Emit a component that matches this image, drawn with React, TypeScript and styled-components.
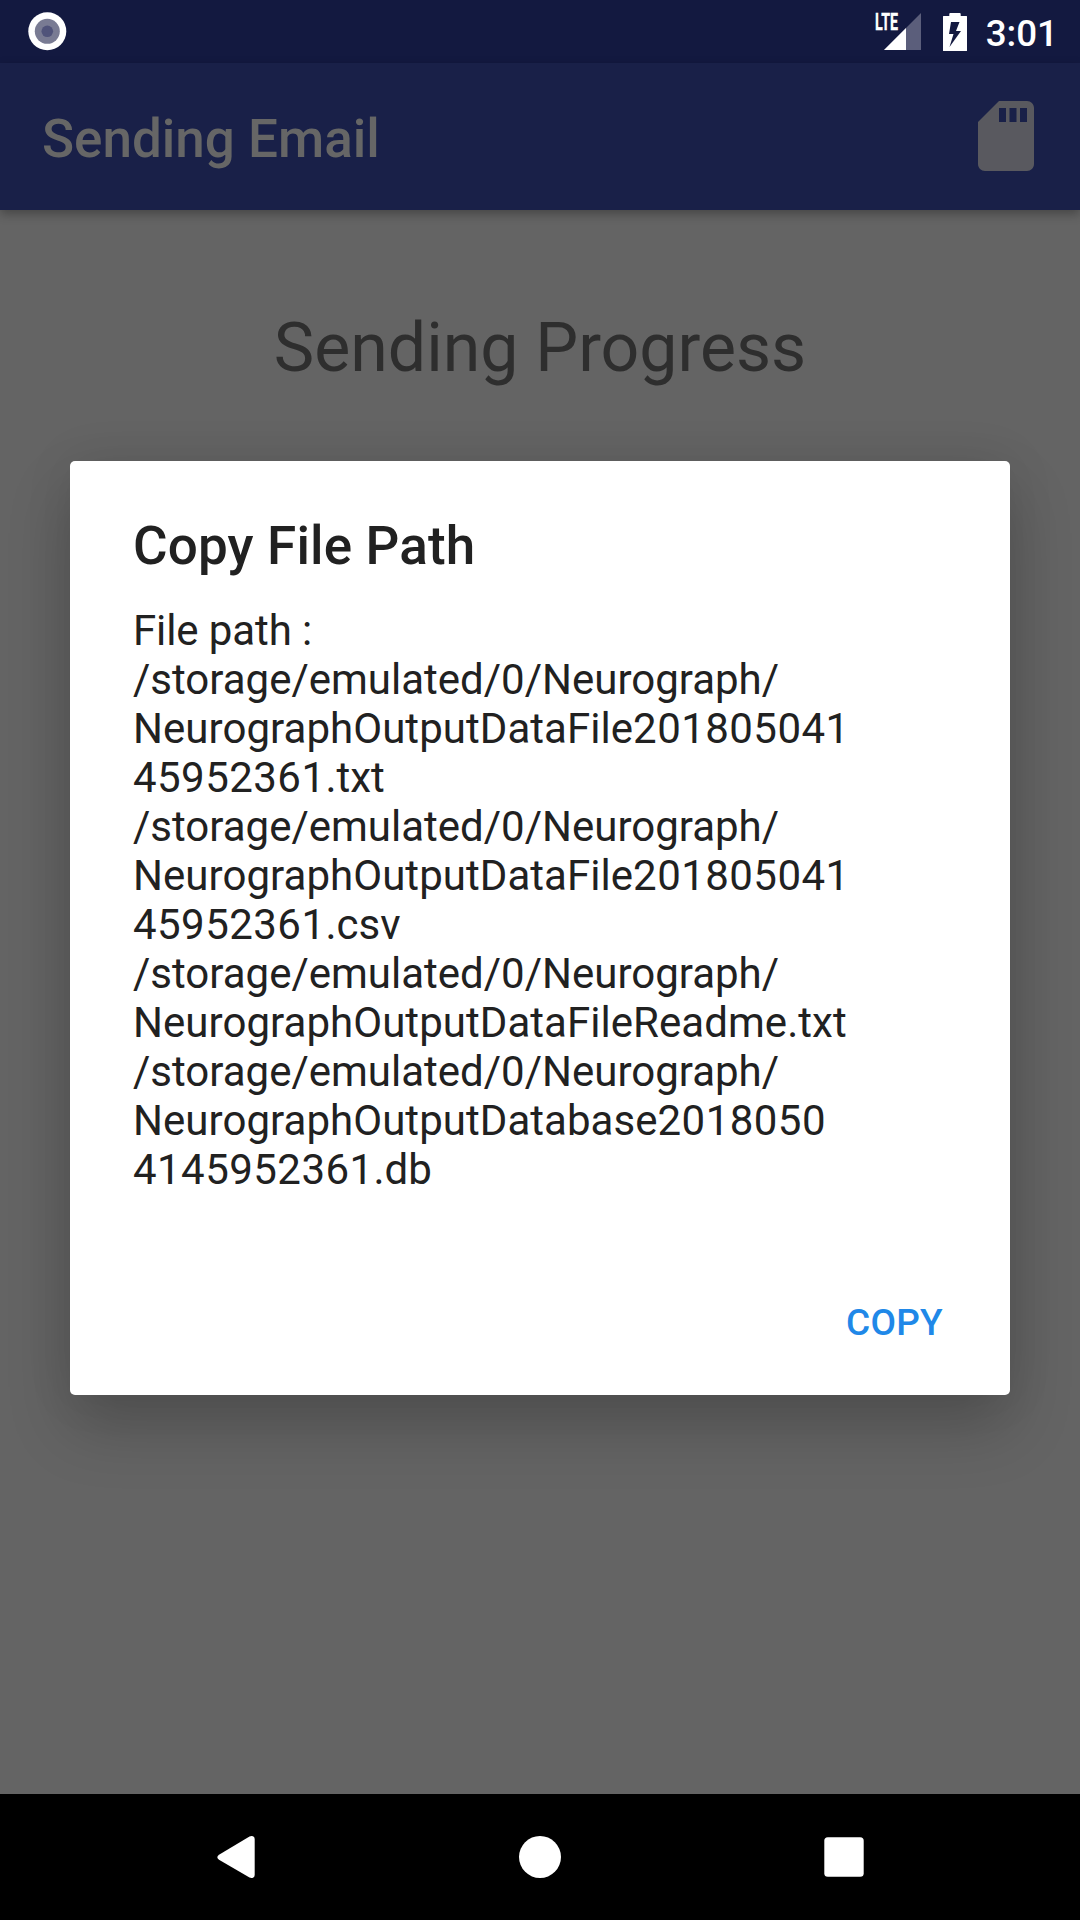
import React from 'react';
import styled, { createGlobalStyle } from 'styled-components';

const GlobalStyle = createGlobalStyle`
  body {
    margin: 0;
    font-family: Roboto, "Noto Sans", sans-serif;
    background: #646464;
  }
`;

const Screen = styled.div`
  position: relative;
  display: flex;
  flex-direction: column;
  width: 1080px;
  height: 1920px;
  overflow: hidden;
  background: #646464;
`;

const StatusBar = styled.header`
  display: flex;
  align-items: center;
  justify-content: space-between;
  box-sizing: border-box;
  height: 63px;
  padding: 0 22px 0 28px;
  background: #131940;
`;

const StatusGroup = styled.div`
  display: flex;
  align-items: center;
  height: 63px;
`;

const Clock = styled.span`
  margin-left: 19px;
  padding-top: 3px;
  color: #fff;
  font-size: 36.75px;
  font-weight: 500;
  line-height: 43px;
`;

const NetworkLabel = styled.span`
  align-self: flex-start;
  width: 24px;
  height: 23px;
  margin: 11px -15px 0 0;
  color: #fff;
  font-size: 23px;
  font-weight: 700;
  line-height: 23px;
  -webkit-text-stroke: 0.3px #fff;
  transform: scaleX(0.62);
  transform-origin: left;
`;

const AppBar = styled.div`
  z-index: 1;
  display: flex;
  align-items: center;
  justify-content: space-between;
  box-sizing: border-box;
  height: 147px;
  padding: 0 32px 2px 42px;
  background: #192048;
  box-shadow: 0 4px 10px rgba(0, 0, 0, 0.3);
`;

const AppTitle = styled.h1`
  margin: 7px 0 0;
  color: #666;
  font-size: 53px;
  font-weight: 500;
  line-height: 62px;
`;

const Page = styled.main`
  flex: 1;
  display: flex;
  justify-content: center;
  padding-top: 98px;
`;

const PageHeading = styled.h2`
  margin: 0;
  color: #2e2e2e;
  font-size: 68px;
  font-weight: 400;
  line-height: 80px;
`;

const NavBar = styled.nav`
  display: flex;
  align-items: center;
  justify-content: center;
  gap: 220px;
  height: 126px;
  background: #000;
`;

const NavIcon = styled.svg`
  display: block;
  width: 84px;
  height: 84px;
  fill: #fff;
`;

const Dialog = styled.section`
  position: absolute;
  z-index: 2;
  top: 461px;
  left: 70px;
  display: flex;
  flex-direction: column;
  box-sizing: border-box;
  width: 940px;
  height: 934px;
  padding: 54px 63px 46px;
  border-radius: 5px;
  background: #fff;
  box-shadow: 0 32px 64px rgba(0, 0, 0, 0.2), 0 0 50px rgba(0, 0, 0, 0.08);
`;

const DialogTitle = styled.h3`
  margin: 0;
  color: #212121;
  font-size: 53px;
  font-weight: 500;
  line-height: 62px;
  letter-spacing: 0.15px;
`;

const DialogText = styled.div`
  margin-top: 29px;
  color: #212121;
  font-size: 42px;
  line-height: 49px;
`;

const TextLine = styled.div<{ $tracking: number }>`
  letter-spacing: ${({ $tracking }) => $tracking}px;
  white-space: nowrap;
`;

const Digits = styled.span`
  letter-spacing: 0.45px;
`;

const DialogActions = styled.div`
  display: flex;
  justify-content: flex-end;
  margin-top: auto;
`;

const ActionButton = styled.button`
  padding: 0 4px;
  border: 0;
  background: none;
  color: #2088e8;
  font-family: inherit;
  font-size: 37px;
  font-weight: 500;
  line-height: 52px;
  letter-spacing: 0.3px;
  text-transform: uppercase;
`;

const pathLines = [
  'File path :',
  '/storage/emulated/0/Neurograph/',
  'NeurographOutputDataFile201805041',
  '45952361.txt',
  '/storage/emulated/0/Neurograph/',
  'NeurographOutputDataFile201805041',
  '45952361.csv',
  '/storage/emulated/0/Neurograph/',
  'NeurographOutputDataFileReadme.txt',
  '/storage/emulated/0/Neurograph/',
  'NeurographOutputDatabase2018050',
  '4145952361.db',
];

const trackingFor = (line: string) => {
  if (line.startsWith('Neurograph')) return 0.05;
  return line.startsWith('File') ? -0.1 : 0;
};

const RecordIcon = () => (
  <svg width="39" height="39" viewBox="0 0 39 39">
    <circle cx="19.3" cy="19.3" r="19" fill="#fff" />
    <circle cx="19.3" cy="19.3" r="12.5" fill="#797b93" />
    <circle cx="19.3" cy="19.3" r="5.8" fill="#50537a" />
  </svg>
);

const SignalIcon = () => (
  <svg width="37" height="37" viewBox="0 0 37 37">
    <path d="M0 37L37 0V37Z" fill="#5b5e7b" />
    <path d="M0 37L22 15V37Z" fill="#fff" />
  </svg>
);

const BatterySvg = styled.svg`
  margin-left: 22px;
`;

const BatteryIcon = () => (
  <BatterySvg width="24" height="38" viewBox="0 0 24 38">
    <path
      fill="#fff"
      fillRule="evenodd"
      d="M6.300 3V1Q6.300 0 7.300 0H16.700Q17.700 0 17.700 1V3H23.500Q24 3 24 3.500V37.500Q24 38 23.500 38H.5Q0 38 0 37.500V3.500Q0 3 .5 3ZM8 9L6 21H10.500L6.500 34L18 18H13L16.500 9Z"
    />
  </BatterySvg>
);

const SdCardIcon = () => (
  <svg width="84" height="84" viewBox="0 0 24 24" fill="#59595f">
    <path d="M18 2h-8L4 8v12c0 1.100.9 2 2 2h12c1.100 0 2-.9 2-2V4c0-1.100-.9-2-2-2zm-6 6h-2V4h2v4zm3 0h-2V4h2v4zm3 0h-2V4h2v4z" />
  </svg>
);

export default function App() {
  return (
    <Screen>
      <GlobalStyle />
      <StatusBar>
        <RecordIcon />
        <StatusGroup>
          <NetworkLabel>LTE</NetworkLabel>
          <SignalIcon />
          <BatteryIcon />
          <Clock>3:01</Clock>
        </StatusGroup>
      </StatusBar>
      <AppBar>
        <AppTitle>Sending Email</AppTitle>
        <SdCardIcon />
      </AppBar>
      <Page>
        <PageHeading>Sending Progress</PageHeading>
      </Page>
      <NavBar>
        <NavIcon viewBox="0 0 84 84">
          <path d="M25 39.700L55.500 21.500Q57 20.700 59 21.200Q60.700 21.700 60.700 24V60Q60.700 62.300 59 62.800Q57 63.300 55.500 62.500L25 44.700Q21.600 42.200 25 39.700Z" />
        </NavIcon>
        <NavIcon viewBox="0 0 84 84">
          <circle cx="42" cy="42" r="21" />
        </NavIcon>
        <NavIcon viewBox="0 0 84 84">
          <rect x="22.300" y="22.300" width="39.400" height="39.400" rx="3.500" />
        </NavIcon>
      </NavBar>
      <Dialog role="dialog">
        <DialogTitle>Copy File Path</DialogTitle>
        <DialogText>
          {pathLines.map((line, i) => (
            <TextLine key={i} $tracking={trackingFor(line)}>
              {line
                .split(/(\d{2,})/)
                .filter(Boolean)
                .map((part, j) => (/^\d{2,}$/.test(part) ? <Digits key={j}>{part}</Digits> : part))}
            </TextLine>
          ))}
        </DialogText>
        <DialogActions>
          <ActionButton>Copy</ActionButton>
        </DialogActions>
      </Dialog>
    </Screen>
  );
}
